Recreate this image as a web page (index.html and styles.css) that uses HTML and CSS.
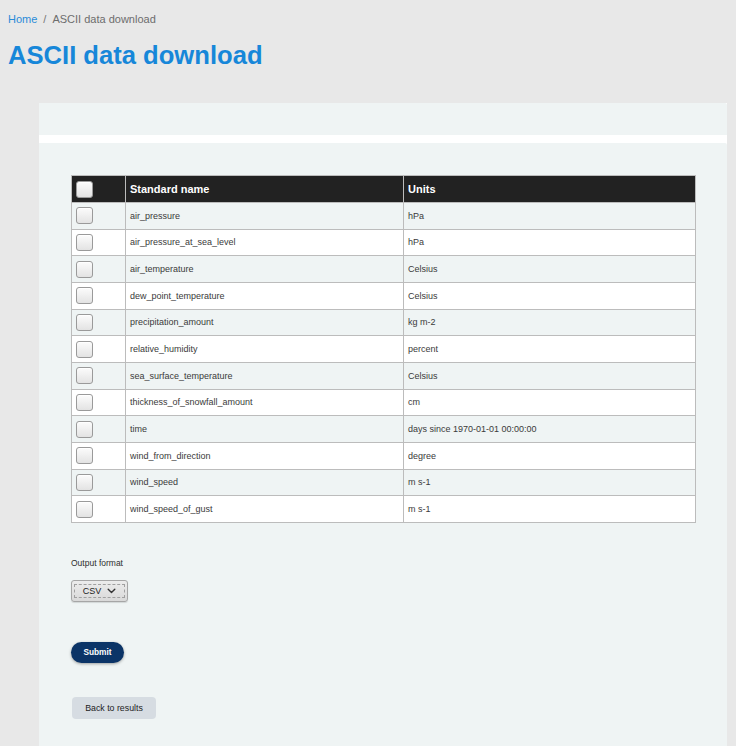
FILE: index.html
```html
<!DOCTYPE html>
<html lang="en">
<head>
<meta charset="utf-8">
<title>ASCII data download</title>
<link rel="stylesheet" href="styles.css">
</head>
<body>
<nav class="breadcrumb"><a href="#" class="crumb-link">Home</a><span class="crumb-sep">/</span><span class="crumb-current">ASCII data download</span></nav>
<h1 class="page-title">ASCII data download</h1>
<div class="panel">
  <div class="panel-top"></div>
  <div class="panel-main">
    <table class="var-table">
      <colgroup><col class="c1"><col class="c2"><col class="c3"></colgroup>
      <thead>
        <tr><th><span class="cb"></span></th><th>Standard name</th><th>Units</th></tr>
      </thead>
      <tbody>
        <tr><td><span class="cb"></span></td><td>air_pressure</td><td>hPa</td></tr>
        <tr><td><span class="cb"></span></td><td>air_pressure_at_sea_level</td><td>hPa</td></tr>
        <tr><td><span class="cb"></span></td><td>air_temperature</td><td>Celsius</td></tr>
        <tr><td><span class="cb"></span></td><td>dew_point_temperature</td><td>Celsius</td></tr>
        <tr><td><span class="cb"></span></td><td>precipitation_amount</td><td>kg m-2</td></tr>
        <tr><td><span class="cb"></span></td><td>relative_humidity</td><td>percent</td></tr>
        <tr><td><span class="cb"></span></td><td>sea_surface_temperature</td><td>Celsius</td></tr>
        <tr><td><span class="cb"></span></td><td>thickness_of_snowfall_amount</td><td>cm</td></tr>
        <tr><td><span class="cb"></span></td><td>time</td><td>days since 1970-01-01 00:00:00</td></tr>
        <tr><td><span class="cb"></span></td><td>wind_from_direction</td><td>degree</td></tr>
        <tr><td><span class="cb"></span></td><td>wind_speed</td><td>m s-1</td></tr>
        <tr><td><span class="cb"></span></td><td>wind_speed_of_gust</td><td>m s-1</td></tr>
      </tbody>
    </table>

    <div class="field">
      <div class="field-label">Output format</div>
      <div class="select-box">
        <div class="select-inner">
          <span class="select-text">CSV</span>
          <svg class="chev" width="9" height="6" viewBox="0 0 9 6"><path d="M1.2 1.2l3.3 3.2 3.3-3.2" fill="none" stroke="#333" stroke-width="1.4" stroke-linecap="round" stroke-linejoin="round"/></svg>
        </div>
      </div>
    </div>

    <div class="submit-row"><button class="btn-submit" type="button">Submit</button></div>
    <div class="back-row"><button class="btn-back" type="button">Back to results</button></div>
  </div>
</div>
</body>
</html>
```
FILE: styles.css
```css
html, body {
  margin: 0;
  padding: 0;
}
body {
  background: #e8e8e8;
  font-family: "Liberation Sans", Arial, sans-serif;
  color: #333;
  height: 746px;
  overflow: hidden;
}
.breadcrumb {
  padding: 12px 8px 0 8px;
  font-size: 11px;
  line-height: 14px;
  height: 14px;
}
.crumb-link {
  color: #2a8bd8;
  text-decoration: none;
}
.crumb-sep {
  color: #777;
  margin: 0 6px 0 6px;
}
.crumb-current {
  color: #6d6d6d;
}
.page-title {
  margin: 13px 0 0 8px;
  font-size: 25.6px;
  line-height: 32px;
  height: 32px;
  font-weight: bold;
  color: #1787d9;
}
.panel {
  margin: 32px 0 0 39px;
  width: 688px;
  background: #ffffff;
  display: flex;
  flex-direction: column;
  gap: 8px;
}
.panel-top {
  height: 32px;
  background: #eff4f4;
  border-radius: 0 2px 0 0;
}
.panel-main {
  background: #eff4f4;
  border-radius: 0 2px 0 0;
  padding: 32px 32px 0 32px;
  height: 603px;
  box-sizing: border-box;
}
.var-table {
  border-collapse: collapse;
  width: 624px;
  table-layout: fixed;
  border: 1px solid #bcbcbc;
}
.c1 { width: 54px; }
.c2 { width: 278px; }
.c3 { width: 292px; }
.var-table th {
  background: #222222;
  color: #fff;
  font-size: 11px;
  font-weight: bold;
  text-align: left;
  height: 27px;
  padding: 0 4px;
  border: 1px solid #bcbcbc;
  box-sizing: border-box;
}
.var-table td {
  font-size: 9px;
  color: #3a3a3a;
  height: 26.67px;
  padding: 0 4px;
  border: 1px solid #bcbcbc;
  box-sizing: border-box;
}
.var-table tbody tr:nth-child(odd) td {
  background: #eff4f4;
}
.var-table tbody tr:nth-child(even) td {
  background: #ffffff;
}
.cb {
  display: block;
  width: 15px;
  height: 15px;
  border: 1px solid #9a9a9a;
  border-radius: 3px;
  background: linear-gradient(#fcfcfc, #e3e3e3);
  box-shadow: inset 0 1px 0 #fff;
}
.field {
  margin-top: 35px;
}
.field-label {
  font-size: 8.5px;
  color: #2d2d2d;
  line-height: 10px;
}
.select-box {
  margin-top: 12px;
  width: 57px;
  height: 22px;
  border: 1px solid #a6a6a6;
  border-radius: 3px;
  background: linear-gradient(#ececec, #d9d9d9);
  padding: 3px 2px;
  box-sizing: border-box;
  box-shadow: 0 1px 1px rgba(0,0,0,0.12);
}
.select-inner {
  height: 14px;
  box-sizing: border-box;
  border: 1px dashed #a0a0a0;
  display: flex;
  align-items: center;
  justify-content: center;
  gap: 6px;
}
.select-text {
  font-size: 9px;
  color: #222;
}
.chev {
  display: block;
}
.submit-row {
  margin-top: 40px;
}
.btn-submit {
  display: block;
  width: 53px;
  height: 21px;
  border: none;
  border-radius: 11px;
  background: #0b3467;
  color: #fff;
  font-family: "Liberation Sans", Arial, sans-serif;
  font-size: 8.3px;
  font-weight: bold;
  padding: 0;
  box-shadow: 0 1px 3px rgba(0,0,0,0.35);
}
.back-row {
  margin-top: 34px;
}
.btn-back {
  display: block;
  margin-left: 1px;
  width: 84px;
  height: 22px;
  border: none;
  border-radius: 4px;
  background: #d6dce2;
  color: #222;
  font-family: "Liberation Sans", Arial, sans-serif;
  font-size: 8.8px;
  padding: 0;
}
```
